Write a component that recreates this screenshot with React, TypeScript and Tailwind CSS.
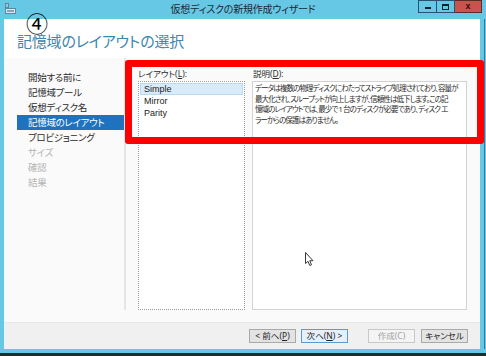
import clsx from "clsx";

const steps = [
  { label: "開始する前に", state: "done" },
  { label: "記憶域プール", state: "done" },
  { label: "仮想ディスク名", state: "done" },
  { label: "記憶域のレイアウト", state: "current" },
  { label: "プロビジョニング", state: "done" },
  { label: "サイズ", state: "todo" },
  { label: "確認", state: "todo" },
  { label: "結果", state: "todo" },
];

const layouts = ["Simple", "Mirror", "Parity"];

function TitleBar() {
  return (
    <div className="grid h-[19px] grid-cols-[1fr_auto_1fr] items-start">
      <div className="pl-[5px] pt-[3px]">
        <svg width="11" height="11" viewBox="0 0 11 11">
          <rect x="0.5" y="0.5" width="3" height="4" fill="#9cc6dc" stroke="#5b88a3" strokeWidth="1" />
          <rect x="0.5" y="5.5" width="10" height="5" fill="#d9e8f0" stroke="#5b88a3" strokeWidth="1" />
          <rect x="2" y="7" width="7" height="2" fill="#7fa6bd" />
        </svg>
      </div>
      <div className="pt-[3px] text-[10px] leading-[12px] tracking-[-0.2px] text-[#1b2a33]">
        仮想ディスクの新規作成ウィザード
      </div>
      <div className="flex justify-end pr-[4px]">
        <div className="flex h-[13px] w-[19px] items-end justify-center border border-[#24546f] pb-[3px]">
          <div className="h-[2px] w-[6px] bg-[#10222c]" />
        </div>
        <div className="flex h-[13px] w-[18px] items-center justify-center border border-l-0 border-[#24546f]">
          <div className="h-[6px] w-[7px] border border-t-2 border-[#10222c]" />
        </div>
        <div className="flex h-[13px] w-[27px] items-center justify-center border border-l-0 border-[#5a2b28] bg-[#c9534d] text-[9px] font-bold leading-none text-[#2a1210] font-['Liberation_Sans',sans-serif]">
          x
        </div>
      </div>
    </div>
  );
}

function Button({
  children,
  variant = "normal",
}: {
  children: React.ReactNode;
  variant?: "normal" | "default" | "disabled";
}) {
  return (
    <div
      className={clsx(
        "flex h-[14px] w-[47px] items-center justify-center border text-[8.5px] leading-none",
        variant === "normal" && "border-[#a9a9a9] bg-[#e3e3e3] text-[#222]",
        variant === "default" && "border-[#5b9bd1] bg-[#e6f0fa] text-[#222]",
        variant === "disabled" && "border-[#c8c8c8] bg-[#f4f4f4] text-[#a3a3a3]"
      )}
    >
      {children}
    </div>
  );
}

export default function App() {
  return (
    <div className="relative flex h-[356px] w-[486px] flex-col overflow-hidden bg-[#67c8e6] font-['Noto_Sans','Noto_Sans_CJK_JP',sans-serif] [font-feature-settings:'palt']">
      <TitleBar />

      <div className="flex h-[330px] pl-[4px]">
        <div className="flex w-[476px] flex-col bg-white">
          <div className="h-[39px] pl-[13px] pt-[15px] text-[15px] leading-[15px] tracking-[-0.2px] text-[#3d86ad]">
            記憶域のレイアウトの選択
          </div>

          <div className="flex min-h-0 flex-1 bg-[#fafafa] pb-[12px]">
            <div className="w-[122px] shrink-0 border-r-2 border-[#e5e5e5] pl-[13px] pt-[12px]">
              {steps.map((s) => (
                <div
                  key={s.label}
                  className={clsx(
                    "h-[15px] whitespace-nowrap pl-[11px] text-[9.5px] leading-[15px] tracking-[-0.3px]",
                    s.state === "current" && "bg-[#1f72bd] text-white",
                    s.state === "done" && "text-[#2b2b2b]",
                    s.state === "todo" && "text-[#b4b4b4]"
                  )}
                >
                  {s.label}
                </div>
              ))}
            </div>

            <div className="flex min-w-0 flex-1 gap-[7px] pl-[12px] pr-[13px] pt-[10px]">
              <div className="flex w-[107px] shrink-0 flex-col">
                <div className="h-[13px] text-[8.5px] leading-[12px] text-[#2b2b2b]">
                  レイアウト(<span className="underline">L</span>):
                </div>
                <div className="flex-1 border border-dotted border-[#9a9a9a] bg-white p-[1px] font-['Liberation_Sans',sans-serif]">
                  {layouts.map((l, i) => (
                    <div
                      key={l}
                      className={clsx(
                        "h-[12px] border pl-[3px] text-[9px] leading-[10px] text-[#222]",
                        i === 0 ? "border-[#b9d8f1] bg-[#d9ebf9]" : "border-transparent"
                      )}
                    >
                      {l}
                    </div>
                  ))}
                </div>
              </div>

              <div className="flex min-w-0 flex-1 flex-col">
                <div className="h-[13px] pl-[1px] text-[8.5px] leading-[12px] text-[#2b2b2b]">
                  説明(<span className="underline">D</span>):
                </div>
                <div className="flex-1 overflow-hidden whitespace-pre border border-[#d3d3d3] bg-white pl-[2px] pt-[1px] text-[7.5px] leading-[10.5px] tracking-[-0.9px] text-[#2b2b2b]">
                  {"データは複数の物理ディスクにわたってストライプ処理されており、容量が\n最大化され、スループットが向上しますが、信頼性は低下します。この記\n憶域のレイアウトでは、最少で 1 台のディスクが必要であり、ディスク エ\nラーからの保護はありません。"}
                </div>
              </div>
            </div>
          </div>

          <div className="flex h-[27px] items-start justify-end border-t border-[#e7e7e7] bg-[#f0f0f0] pr-[12px] pt-[6px]">
            <Button>
              &lt; 前へ(<span className="underline">P</span>)
            </Button>
            <div className="ml-[5px]">
              <Button variant="default">
                次へ(<span className="underline">N</span>) &gt;
              </Button>
            </div>
            <div className="ml-[20px]">
              <Button variant="disabled">作成(C)</Button>
            </div>
            <div className="ml-[6px]">
              <Button>キャンセル</Button>
            </div>
          </div>
        </div>
        <div className="ml-[4px] w-[1px] bg-[#2d7aa1]" />
      </div>

      <div className="h-[4px]" />
      <div className="h-[3px] bg-[#1c2a31]" />

      {/* annotation overlays */}
      <div className="absolute left-[26px] top-[12px] text-[22px] leading-[20px] text-black font-['Noto_Sans_CJK_JP',sans-serif]">
        ④
      </div>
      <div className="absolute left-[125px] top-[60px] h-[84px] w-[359px] rounded-[3px] border-[7px] border-[#ff0000]" />
      <svg className="absolute left-[305px] top-[252px]" width="10" height="15" viewBox="0 0 10 15">
        <path
          d="M0.5 0.5 L0.5 11.5 L3 9.3 L4.8 13.5 L6.5 12.8 L4.8 8.7 L8 8.7 Z"
          fill="white"
          stroke="#3a3a3a"
          strokeWidth="1"
        />
      </svg>
    </div>
  );
}
